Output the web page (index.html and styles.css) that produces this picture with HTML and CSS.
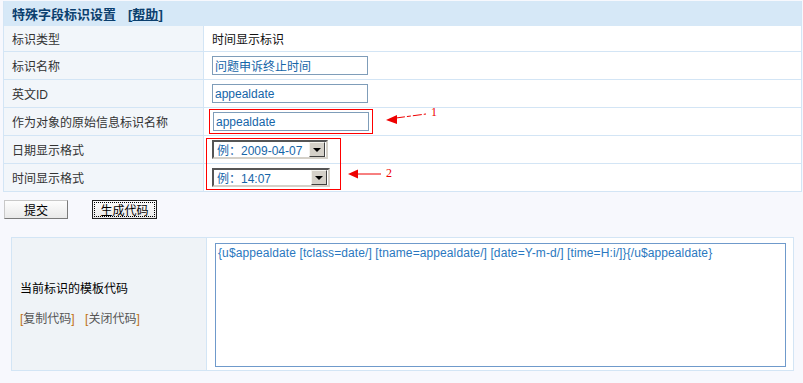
FILE: index.html
```html
<!DOCTYPE html>
<html lang="zh-CN">
<head>
  <meta charset="UTF-8" />
  <title>特殊字段标识设置</title>
  <link rel="stylesheet" href="styles.css">
</head>
<body>
  <div class="page">
    <div class="setting">
      <div class="setting-head">
        <b>特殊字段标识设置</b>
        <a class="help" href="#">[<u>帮助</u>]</a>
      </div>

      <div class="row row-first">
        <div class="label">标识类型</div>
        <div class="value">时间显示标识</div>
      </div>
      <div class="row">
        <div class="label">标识名称</div>
        <div class="value"><input type="text" class="text" value="问题申诉终止时间" /></div>
      </div>
      <div class="row">
        <div class="label">英文ID</div>
        <div class="value"><input type="text" class="text" value="appealdate" /></div>
      </div>
      <div class="row">
        <div class="label">作为对象的原始信息标识名称</div>
        <div class="value"><input type="text" class="text" value="appealdate" /></div>
      </div>
      <div class="row">
        <div class="label">日期显示格式</div>
        <div class="value">
          <div class="combo combo-date">
            <span class="combo-text">例：2009-04-07</span>
            <span class="combo-btn"><i></i></span>
          </div>
        </div>
      </div>
      <div class="row">
        <div class="label">时间显示格式</div>
        <div class="value">
          <div class="combo combo-time">
            <span class="combo-text">例：14:07</span>
            <span class="combo-btn"><i></i></span>
          </div>
        </div>
      </div>
    </div>

    <div class="actions">
      <button type="button" class="btn">提交</button>
      <button type="button" class="btn btn-default">生成代码</button>
    </div>

    <div class="code-box">
      <div class="code-label">
        <p>当前标识的模板代码</p>
        <p class="code-links">
          <a href="#"><em>[</em>复制代码<em>]</em></a>
          <a href="#"><em>[</em>关闭代码<em>]</em></a>
        </p>
      </div>
      <div class="code-value">
        <textarea class="code-area" readonly>{u$appealdate [tclass=date/] [tname=appealdate/] [date=Y-m-d/] [time=H:i/]}{/u$appealdate}</textarea>
      </div>
    </div>

    <!-- red annotation marks drawn over the form -->
    <svg class="marks" width="803" height="200" viewBox="0 0 803 200">
      <rect x="209.5" y="109.5" width="163" height="24" fill="none" stroke="#f00" />
      <rect x="206.5" y="138.5" width="134" height="51" fill="none" stroke="#f00" />

      <polyline points="396,118 426,114" fill="none" stroke="#e00" stroke-width="1" stroke-dasharray="9 2 4 2" />
      <polygon points="386,120 397,115 397,124" fill="#e00" />
      <text x="431" y="116" class="mark-num">1</text>

      <line x1="357" y1="174" x2="381" y2="174" stroke="#e00" stroke-width="1" />
      <polygon points="348,174 358,169.5 358,178.5" fill="#e00" />
      <text x="386" y="177" class="mark-num">2</text>
    </svg>
  </div>
</body>
</html>
```

FILE: styles.css
```css
* {
  box-sizing: border-box;
}

body {
  margin: 0;
  background: #f7f8fd;
  font-family: "Liberation Sans", "Noto Sans CJK SC", sans-serif;
  font-size: 12px;
  color: #333;
}

.page {
  position: relative;
  width: 803px;
  padding-top: 1px;
}

/* main settings table */
.setting {
  margin-left: 3px;
  width: 799px;
  border-left: 1px solid #d3e5f5;
  border-right: 1px solid #d3e5f5;
  background: #fff;
}

.setting-head {
  height: 25px;
  display: flex;
  align-items: center;
  padding-left: 8px;
  background: #d6e8f7;
  color: #0b3f6e;
  font-size: 13px;
}

.setting-head b {
  font-weight: bold;
}

.help {
  margin-left: 12px;
  color: #0b3f6e;
  font-weight: bold;
  text-decoration: none;
}

.row {
  display: flex;
  height: 28px;
  border-bottom: 1px solid #d3e5f5;
}

.row-first {
  height: 26px;
}

.label {
  width: 200px;
  display: flex;
  align-items: center;
  padding-left: 8px;
  border-right: 1px solid #d3e5f5;
  background: #f2f6fa;
  color: #333;
}

.value {
  flex: 1;
  display: flex;
  align-items: center;
  padding-left: 8px;
  color: #111;
}

input.text {
  width: 156px;
  height: 19px;
  margin: 0;
  padding: 0 2px;
  border: 1px solid #7f9db9;
  font-family: "Liberation Sans", "Noto Sans CJK SC", sans-serif;
  font-size: 12px;
  color: #1565a8;
  outline: none;
}

.row:nth-child(5) input.text {
  margin-left: 1px;
}

/* old windows style drop-downs */
.combo {
  height: 19px;
  display: flex;
  align-items: center;
  justify-content: space-between;
  padding: 0 1px 0 3px;
  border: 2px solid;
  border-color: #555 #d4d0c8 #d4d0c8 #555;
  background: #fff;
  color: #1565a8;
}

.combo-date {
  width: 116px;
}

.combo-time {
  width: 118px;
}

.combo-btn {
  width: 16px;
  height: 15px;
  display: flex;
  align-items: center;
  justify-content: center;
  background: #d4d0c8;
  border: 1px solid;
  border-color: #f4f3ee #404040 #404040 #f4f3ee;
}

.combo-btn i {
  width: 0;
  height: 0;
  border-left: 4px solid transparent;
  border-right: 4px solid transparent;
  border-top: 4px solid #000;
}

/* buttons */
.actions {
  display: flex;
  gap: 24px;
  padding-left: 4px;
  margin-top: 8px;
}

.btn {
  width: 64px;
  height: 19px;
  padding: 0;
  border: 1px solid;
  border-color: #c8c8c8 #7a7a7a #7a7a7a #c8c8c8;
  background: linear-gradient(#fdfdfd, #e9e9e9);
  font-family: "Noto Sans CJK SC", sans-serif;
  font-size: 12px;
  line-height: 17px;
  color: #000;
}

.btn-default {
  width: 65px;
  border-color: #222;
  outline: 1px dotted #000;
  outline-offset: -3px;
}

/* template code panel */
.code-box {
  display: flex;
  margin: 18px 0 0 11px;
  width: 783px;
  height: 134px;
  border: 1px solid #d3e5f5;
}

.code-label {
  width: 195px;
  display: flex;
  flex-direction: column;
  justify-content: center;
  gap: 13px;
  padding: 0 0 3px 8px;
  border-right: 1px solid #d3e5f5;
  background: #eff3f7;
  color: #000;
}

.code-label p {
  margin: 0;
}

.code-links a {
  color: #555;
  text-decoration: none;
  margin-right: 7px;
}

.code-links em {
  font-style: normal;
  color: #c0700f;
}

.code-value {
  flex: 1;
  padding: 5px 7px 3px 8px;
  background: #fff;
}

.code-area {
  display: block;
  width: 571px;
  height: 124px;
  margin: 0;
  padding: 2px 2px;
  border: 1px solid #6f9acb;
  resize: none;
  outline: none;
  font-family: "Liberation Sans", sans-serif;
  font-size: 12px;
  line-height: 14px;
  letter-spacing: 0.1px;
  color: #2a78c0;
}

.marks {
  position: absolute;
  left: 0;
  top: 0;
  pointer-events: none;
}

.mark-num {
  font-family: "Liberation Serif", serif;
  font-size: 12px;
  fill: #e00;
}
```
